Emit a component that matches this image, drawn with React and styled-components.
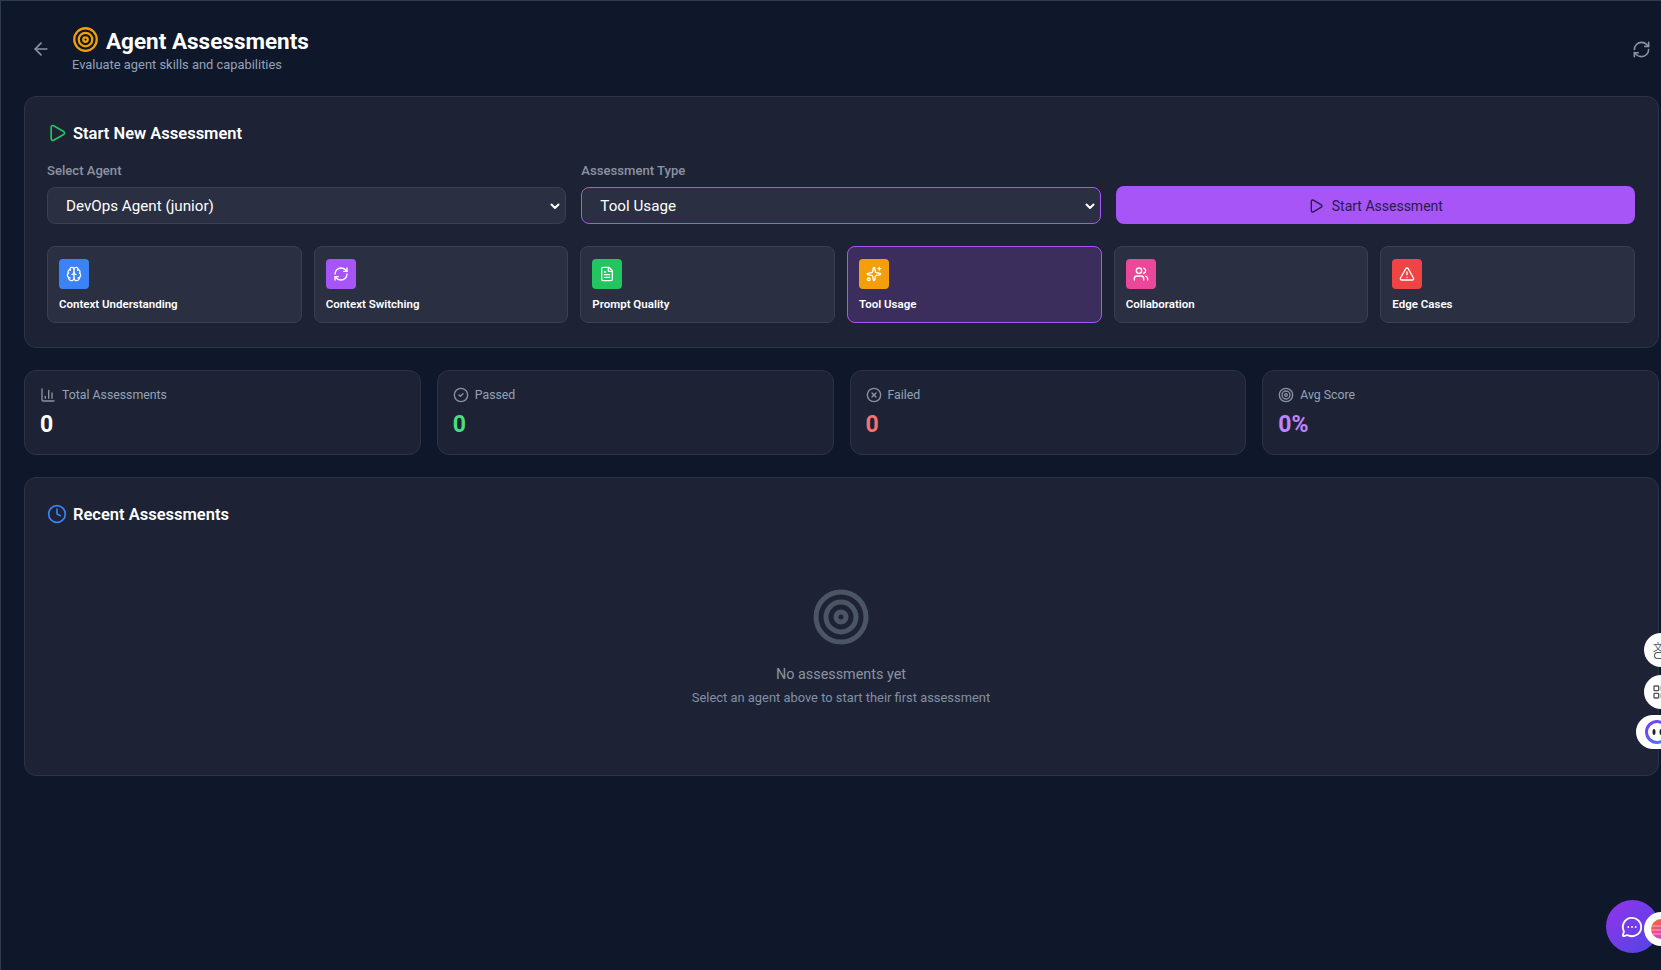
import React from "react";
import styled, { createGlobalStyle } from "styled-components";
import {
  ArrowLeft, Target, RefreshCw, Play, Brain, FileText, Sparkles, Users, TriangleAlert,
  ChartColumn, CircleCheck, CircleX, Clock, MessageCircleMore, LayoutGrid,
} from "lucide-react";

const Global = createGlobalStyle`
  html, body { margin: 0; padding: 0; background: #0f172a; overflow: hidden; }
  body { font-family: Roboto, "Noto Sans", sans-serif; color: #fff; }
  * { box-sizing: border-box; }
`;

const chevron = `url("data:image/svg+xml,%3Csvg xmlns='http://www.w3.org/2000/svg' width='12' height='12' viewBox='0 0 12 12' fill='none' stroke='white' stroke-width='2' stroke-linecap='round' stroke-linejoin='round'%3E%3Cpath d='M2.5 4.5 6 8l3.5-3.5'/%3E%3C/svg%3E")`;

const Page = styled.div`
  position: relative;
  height: 970px;
  overflow: hidden;
  background: #0f172a;
  border-top: 1px solid #2d3a4f;
  border-left: 1px solid #2d3a4f;
  padding: 0 2px 0 23px;
`;

const Header = styled.header`
  display: flex;
  align-items: center;
  height: 95px;
  padding: 3px 0 0 7px;
`;
const IconButton = styled.button`
  display: flex;
  align-items: center;
  justify-content: center;
  width: 20px;
  height: 20px;
  margin-top: -2px;
  padding: 0;
  background: none;
  border: 0;
  color: #8b93a1;
`;
const HeaderText = styled.div`
  flex: 1;
  margin-left: 21px;
`;
const TitleRow = styled.div`
  display: flex;
  align-items: center;
  gap: 7px;
  color: #f59e0b;
`;
const Title = styled.h1`
  margin: 0 0 -1px;
  padding-top: 1px;
  font-size: 22.5px;
  line-height: 28px;
  font-weight: 700;
  color: #fff;
`;
const Subtitle = styled.p`
  margin: 1px 0 0;
  font-size: 12.9px;
  line-height: 20px;
  color: #94a3b8;
`;
const RefreshButton = styled(IconButton)`
  margin-right: 8px;
`;

const Panel = styled.section`
  background: #1d2335;
  border: 1px solid #2d3344;
  border-radius: 12px;
  padding: 22px 23px 24px 22px;
  margin-bottom: 22px;
`;
const PanelTitle = styled.h2`
  display: flex;
  align-items: center;
  gap: 6px;
  margin: 0 0 14px;
  font-size: 16.5px;
  line-height: 28px;
  font-weight: 600;
  color: #fff;
`;
const PanelTitleText = styled.span`
  margin-bottom: -1px;
  padding-top: 1px;
`;
const FormGrid = styled.div`
  display: grid;
  grid-template-columns: repeat(3, 1fr);
  gap: 15px;
  align-items: end;
  margin-bottom: 22px;
`;
const Field = styled.label`
  display: flex;
  flex-direction: column;
  gap: 6px;
  font-size: 13.1px;
  line-height: 20px;
  font-weight: 500;
  color: #8b93a1;
`;
const Select = styled.select`
  appearance: none;
  height: 37px;
  padding: 0 18px;
  font: 400 15.2px Roboto, sans-serif;
  color: #fff;
  background: #2a2f41 ${chevron} no-repeat right 4px center;
  border: 1px solid ${(p) => (p.$active ? "#a855f7" : "#3a4050")};
  border-radius: 8px;
  outline: none;
`;
const StartButton = styled.button`
  display: flex;
  align-items: center;
  justify-content: center;
  gap: 8px;
  height: 38px;
  padding: 1px 0 0;
  border: 0;
  border-radius: 8px;
  background: #a855f7;
  color: #2a1a4a;
  font: 400 14px Roboto, sans-serif;
`;
const TypeGrid = styled.div`
  display: grid;
  grid-template-columns: repeat(6, 1fr);
  gap: 12px;
`;
const TypeCard = styled.div`
  height: 77px;
  padding: 12px 11px;
  border-radius: 8px;
  border: 1px solid ${(p) => (p.$active ? "#a855f7" : "#3a4050")};
  background: ${(p) => (p.$active ? "#3b2d5c" : "#2a2f41")};
`;
const TypeIcon = styled.div`
  display: flex;
  align-items: center;
  justify-content: center;
  width: 30px;
  height: 30px;
  margin-bottom: 8px;
  border-radius: 4px;
  color: #fff;
  background: ${(p) => p.$color};
`;
const TypeName = styled.div`
  font-size: 11.5px;
  line-height: 15px;
  font-weight: 600;
  color: #fff;
`;

const StatsGrid = styled.div`
  display: grid;
  grid-template-columns: repeat(4, 1fr);
  gap: 16px;
  margin-bottom: 22px;
`;
const StatCard = styled.div`
  height: 85px;
  padding: 16px 15px 15px;
  background: #1d2335;
  border: 1px solid #2d3344;
  border-radius: 12px;
`;
const StatLabel = styled.div`
  display: flex;
  align-items: center;
  gap: 6px;
  font-size: 12.3px;
  line-height: 16px;
  color: #94a3b8;
  svg { color: #8b93a1; }
`;
const StatValue = styled.div`
  margin-top: 6px;
  font-size: 23px;
  line-height: 32px;
  font-weight: 700;
  color: ${(p) => p.$color};
`;

const EmptyPanel = styled(Panel)`
  height: 299px;
  margin: 0;
`;
const Empty = styled.div`
  display: flex;
  flex-direction: column;
  align-items: center;
  padding-top: 45px;
  color: #4b5563;
`;
const EmptyTitle = styled.div`
  margin-top: 16px;
  font-size: 14.4px;
  line-height: 24px;
  color: #8b93a1;
`;
const EmptyText = styled.div`
  margin-top: 1px;
  font-size: 12.9px;
  line-height: 20px;
  color: #8290a6;
`;

const SideBadge = styled.div`
  position: absolute;
  left: ${(p) => p.$left}px;
  top: ${(p) => p.$top}px;
  width: ${(p) => p.$w || 34}px;
  height: 34px;
  border-radius: 17px;
  background: #fff;
  display: flex;
  align-items: center;
  padding-left: ${(p) => p.$pad || 8}px;
  color: #555;
`;
const TranslateStack = styled.div`
  display: flex;
  flex-direction: column;
  align-items: flex-start;
  margin-left: 1px;
`;
const TranslateGlyph = styled.span`
  font: 400 10px/10px "Noto Sans CJK SC", sans-serif;
  color: #555;
`;
const TranslateArc = styled.span`
  width: 10px;
  height: 7px;
  margin-left: 1px;
  border: 1.5px solid #555;
  border-right: 0;
  border-radius: 4px 0 0 4px;
`;
const ChatBubble = styled.div`
  position: absolute;
  left: 1605px;
  top: 899px;
  width: 53px;
  height: 53px;
  border-radius: 50%;
  background: linear-gradient(135deg, #9333ea, #4f46e5);
  display: flex;
  align-items: center;
  justify-content: center;
  padding-right: 2px;
  color: #fff;
`;

const types = [
  ["Context Understanding", "#3b82f6", Brain],
  ["Context Switching", "#a855f7", RefreshCw],
  ["Prompt Quality", "#22c55e", FileText],
  ["Tool Usage", "#f59e0b", Sparkles, true],
  ["Collaboration", "#ec4899", Users],
  ["Edge Cases", "#ef4444", TriangleAlert],
];
const stats = [
  ["Total Assessments", "0", "#fff", ChartColumn],
  ["Passed", "0", "#4ade80", CircleCheck],
  ["Failed", "0", "#f87171", CircleX],
  ["Avg Score", "0%", "#c084fc", Target],
];

const Logo = () => (
  <svg width="26" height="26" viewBox="0 0 26 26" fill="none">
    <defs>
      <linearGradient id="lg" x1="0" y1="0" x2="1" y2="1">
        <stop offset="0" stopColor="#7c3aed" />
        <stop offset="1" stopColor="#3b82f6" />
      </linearGradient>
    </defs>
    <circle cx="13" cy="13" r="10.5" stroke="url(#lg)" strokeWidth="3" />
    <ellipse cx="10" cy="13" rx="1.5" ry="3" fill="#222" />
    <ellipse cx="17" cy="13" rx="1.5" ry="3" fill="#222" />
  </svg>
);
const Orb = () => (
  <svg width="24" height="24" viewBox="0 0 24 24">
    <defs>
      <linearGradient id="orb" x1="0" y1="0" x2="1" y2="1">
        <stop offset="0" stopColor="#f97316" />
        <stop offset="0.5" stopColor="#ec4899" />
        <stop offset="1" stopColor="#8b5cf6" />
      </linearGradient>
    </defs>
    <circle cx="12" cy="12" r="10" fill="url(#orb)" />
    <path d="M3 9h18M2 13h20M4 17h16" stroke="#fff" strokeOpacity=".5" />
  </svg>
);

export default function App() {
  return (
    <Page>
      <Global />
      <Header>
        <IconButton aria-label="Back"><ArrowLeft size={20} /></IconButton>
        <HeaderText>
          <TitleRow>
            <Target size={27} />
            <Title>Agent Assessments</Title>
          </TitleRow>
          <Subtitle>Evaluate agent skills and capabilities</Subtitle>
        </HeaderText>
        <RefreshButton aria-label="Refresh"><RefreshCw size={19} /></RefreshButton>
      </Header>

      <Panel>
        <PanelTitle>
          <Play size={20} color="#22c55e" />
          <PanelTitleText>Start New Assessment</PanelTitleText>
        </PanelTitle>
        <FormGrid>
          <Field>
            Select Agent
            <Select defaultValue="d">
              <option value="d">DevOps Agent (junior)</option>
            </Select>
          </Field>
          <Field>
            Assessment Type
            <Select $active defaultValue="t">
              <option value="t">Tool Usage</option>
            </Select>
          </Field>
          <StartButton><Play size={16} />Start Assessment</StartButton>
        </FormGrid>
        <TypeGrid>
          {types.map(([name, color, Icon, active]) => (
            <TypeCard key={name} $active={active}>
              <TypeIcon $color={color}><Icon size={16} /></TypeIcon>
              <TypeName>{name}</TypeName>
            </TypeCard>
          ))}
        </TypeGrid>
      </Panel>

      <StatsGrid>
        {stats.map(([label, value, color, Icon]) => (
          <StatCard key={label}>
            <StatLabel><Icon size={16} />{label}</StatLabel>
            <StatValue $color={color}>{value}</StatValue>
          </StatCard>
        ))}
      </StatsGrid>

      <EmptyPanel>
        <PanelTitle>
          <Clock size={20} color="#3b82f6" />
          <PanelTitleText>Recent Assessments</PanelTitleText>
        </PanelTitle>
        <Empty>
          <Target size={60} />
          <EmptyTitle>No assessments yet</EmptyTitle>
          <EmptyText>Select an agent above to start their first assessment</EmptyText>
        </Empty>
      </EmptyPanel>

      <SideBadge $left={1643} $top={632}>
        <TranslateStack>
          <TranslateGlyph>文</TranslateGlyph>
          <TranslateArc />
        </TranslateStack>
      </SideBadge>
      <SideBadge $left={1643} $top={674}><LayoutGrid size={16} /></SideBadge>
      <SideBadge $left={1635} $top={714} $w={40}><Logo /></SideBadge>
      <ChatBubble><MessageCircleMore size={22} /></ChatBubble>
      <SideBadge $left={1643} $top={911} $pad={5}><Orb /></SideBadge>
    </Page>
  );
}
